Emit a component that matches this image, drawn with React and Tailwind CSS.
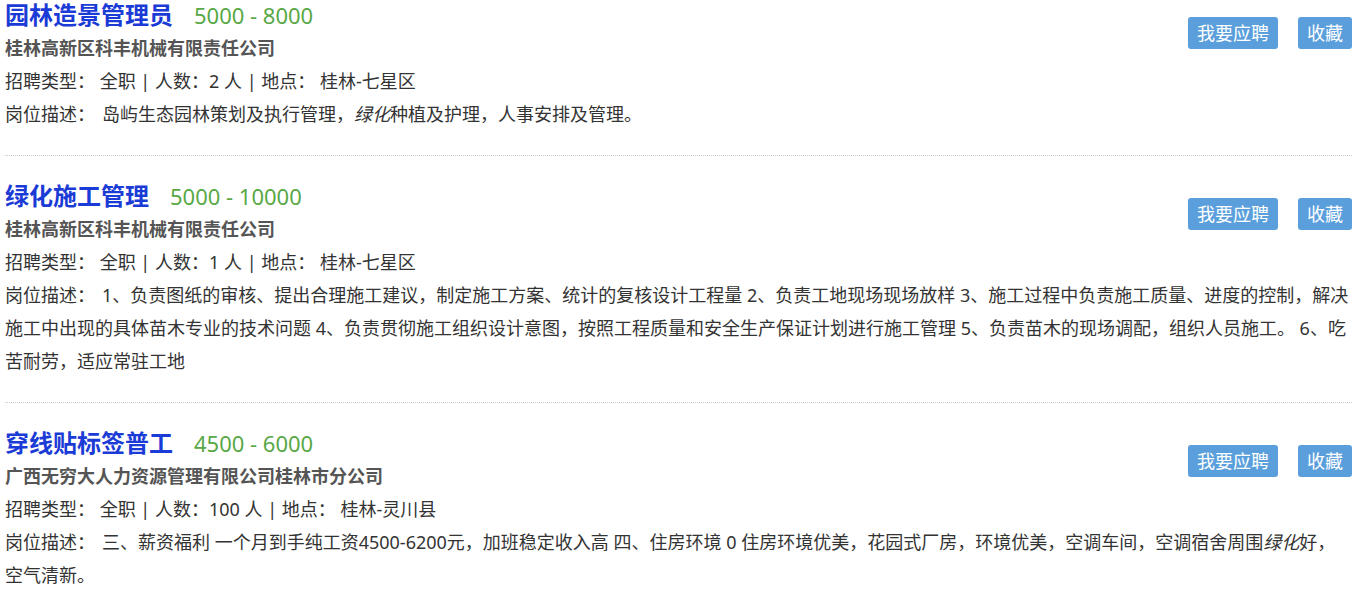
import React from "react";

const jobs = [
  {
    title: "园林造景管理员",
    salary: "5000 - 8000",
    company: "桂林高新区科丰机械有限责任公司",
    count: "2",
    place: "桂林-七星区",
    desc: (
      <>
        岛屿生态园林策划及执行管理，<em>绿化</em>种植及护理，人事安排及管理。
      </>
    ),
  },
  {
    title: "绿化施工管理",
    salary: "5000 - 10000",
    company: "桂林高新区科丰机械有限责任公司",
    count: "1",
    place: "桂林-七星区",
    desc: (
      <>
        1、负责图纸的审核、提出合理施工建议，制定施工方案、统计的复核设计工程量 2、负责工地现场现场放样 3、施工过程中负责施工质量、进度的控制，解决施工中出现的具体苗木专业的技术问题 4、负责贯彻施工组织设计意图，按照工程质量和安全生产保证计划进行施工管理 5、负责苗木的现场调配，组织人员施工。 6、吃苦耐劳，适应常驻工地
      </>
    ),
  },
  {
    title: "穿线贴标签普工",
    salary: "4500 - 6000",
    company: "广西无穷大人力资源管理有限公司桂林市分公司",
    count: "100",
    place: "桂林-灵川县",
    desc: (
      <>
        三、薪资福利 一个月到手纯工资4500-6200元，加班稳定收入高 四、住房环境 0 住房环境优美，花园式厂房，环境优美，空调车间，空调宿舍周围<em>绿化</em>好，
        <br />
        空气清新。
      </>
    ),
  },
];

function Job({ job, last }) {
  return (
    <div
      className={
        "pt-[23px] pb-[24px] " +
        (last ? "" : "border-b border-dotted border-[#c8c8c8]")
      }
    >
      <div className="float-right mt-[19px] flex gap-[20px]">
        <button className="h-[32px] px-[9px] rounded-[3px] bg-[#5a9fdc] text-white text-[18px] leading-[32px]">
          我要应聘
        </button>
        <button className="h-[32px] px-[9px] rounded-[3px] bg-[#5a9fdc] text-white text-[18px] leading-[32px]">
          收藏
        </button>
      </div>
      <div className="leading-[34px] flex items-baseline">
        <span className="text-[24px] font-bold text-[#1b3bd6]">{job.title}</span>
        <span className="ml-[21px] text-[22px] text-[#58a846]">{job.salary}</span>
      </div>
      <div className="leading-[33px] text-[18px] font-bold text-[#555]">{job.company}</div>
      <div className="leading-[33px] text-[18px] text-[#333]">
        招聘类型：&nbsp;全职 | 人数：{job.count} 人 | 地点：&nbsp;{job.place}
      </div>
      <div className="leading-[33px] text-[18px] text-[#333]">
        <span className="mr-[7px]">岗位描述：</span>
        {job.desc}
      </div>
    </div>
  );
}

export default function App() {
  return (
    <div
      className="bg-white w-[1355px] h-[593px] overflow-hidden pl-[5px] pr-[3px]"
      style={{ fontFamily: '"Noto Sans", "Noto Sans CJK SC", sans-serif' }}
    >
      <div className="-mt-[25px]">
        {jobs.map((j, i) => (
          <Job key={i} job={j} last={i === jobs.length - 1} />
        ))}
      </div>
    </div>
  );
}
